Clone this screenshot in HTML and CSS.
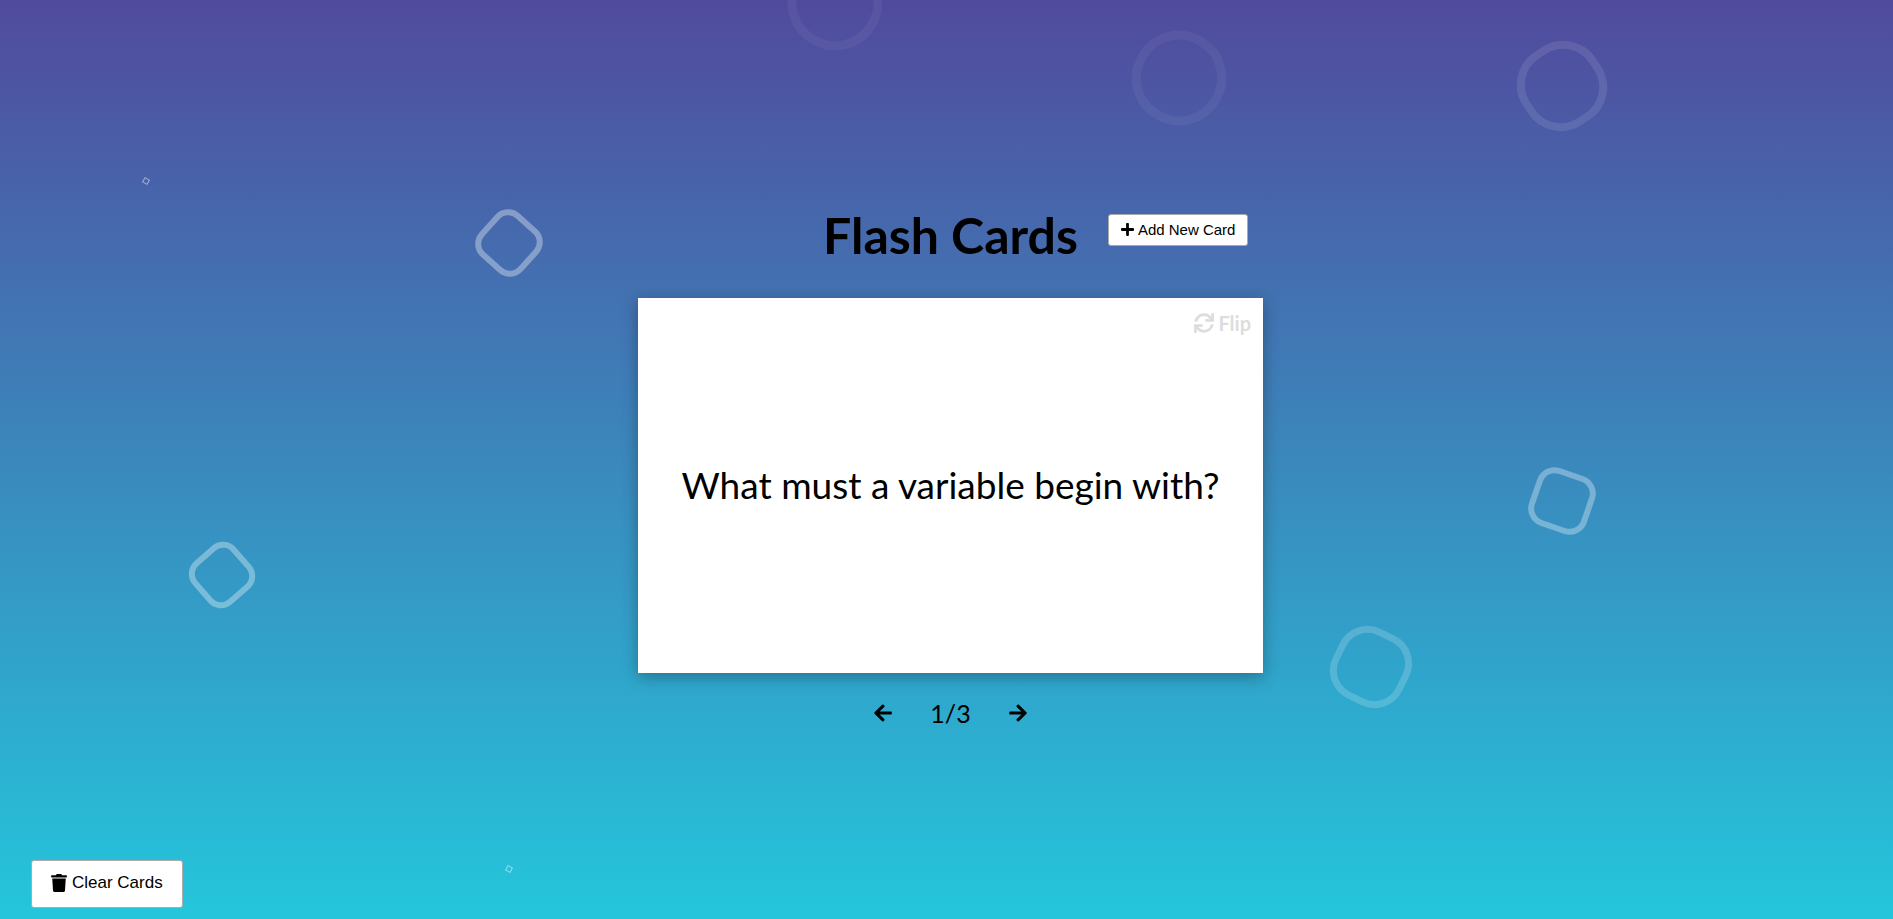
FILE: index.html
```html
<!DOCTYPE html>
<html lang="en">
<head>
<meta charset="utf-8">
<title>Flash Cards</title>
<link rel="stylesheet" href="styles.css">
</head>
<body>
<div class="shapes" aria-hidden="true">
  <span class="shape shape-top"></span>
  <span class="shape shape-round"></span>
  <span class="shape shape-corner"></span>
  <span class="shape shape-upper-left"></span>
  <span class="shape shape-lower-left"></span>
  <span class="shape shape-right"></span>
  <span class="shape shape-lower-right"></span>
  <span class="shape shape-dot-left"></span>
  <span class="shape shape-dot-bottom"></span>
</div>
<main class="deck">
  <header class="deck-header">
    <h1 class="title">Flash Cards</h1>
    <button class="btn btn-small" type="button">
      <svg class="icon icon-plus" viewBox="0 0 448 512" aria-hidden="true"><path d="M416 208H272V64c0-17.67-14.33-32-32-32h-32c-17.67 0-32 14.33-32 32v144H32c-17.67 0-32 14.33-32 32v32c0 17.67 14.33 32 32 32h144v144c0 17.67 14.33 32 32 32h32c17.67 0 32-14.33 32-32V304h144c17.67 0 32-14.33 32-32v-32c0-17.67-14.33-32-32-32z"/></svg>
      Add New Card
    </button>
  </header>
  <article class="card">
    <p class="flip">
      <svg class="icon icon-flip" viewBox="0 0 512 512" aria-hidden="true"><path d="M440.65 12.57l4 82.77A247.16 247.16 0 0 0 255.83 8C134.73 8 33.91 94.92 12.29 209.82A12 12 0 0 0 24.09 224h49.05a12 12 0 0 0 11.67-9.26 175.91 175.91 0 0 1 317-56.94l-101.46-4.86a12 12 0 0 0-12.57 12v47.41a12 12 0 0 0 12 12H500a12 12 0 0 0 12-12V12a12 12 0 0 0-12-12h-47.37a12 12 0 0 0-11.98 12.57zM255.83 432a175.61 175.61 0 0 1-146-77.8l101.8 4.87a12 12 0 0 0 12.57-12v-47.4a12 12 0 0 0-12-12H12a12 12 0 0 0-12 12V500a12 12 0 0 0 12 12h47.35a12 12 0 0 0 12-12.6l-4.15-82.57A247.17 247.17 0 0 0 255.83 504c121.11 0 221.93-86.92 243.55-201.82a12 12 0 0 0-11.8-14.18h-49.05a12 12 0 0 0-11.67 9.26A175.86 175.86 0 0 1 255.83 432z"/></svg>
      Flip
    </p>
    <p class="question">What must a variable begin with?</p>
  </article>
  <nav class="navigation" aria-label="Cards">
    <button class="nav-button" type="button" aria-label="Previous card">
      <svg class="icon icon-arrow" viewBox="0 0 448 512" aria-hidden="true"><path d="M257.5 445.1l-22.2 22.2c-9.4 9.4-24.6 9.4-33.9 0L7 273c-9.4-9.4-9.4-24.6 0-33.9L201.4 44.7c9.4-9.4 24.6-9.4 33.9 0l22.2 22.2c9.5 9.5 9.3 25-.4 34.3L136.6 216H424c13.3 0 24 10.7 24 24v32c0 13.3-10.7 24-24 24H136.6l120.5 114.8c9.8 9.3 10 24.8.4 34.3z"/></svg>
    </button>
    <p class="current">1/3</p>
    <button class="nav-button" type="button" aria-label="Next card">
      <svg class="icon icon-arrow" viewBox="0 0 448 512" aria-hidden="true"><path d="M190.5 66.9l22.2-22.2c9.4-9.4 24.6-9.4 33.9 0L441 239c9.4 9.4 9.4 24.6 0 33.9L246.6 467.3c-9.4 9.4-24.6 9.4-33.9 0l-22.2-22.2c-9.5-9.5-9.3-25 .4-34.3L311.4 296H24c-13.3 0-24-10.7-24-24v-32c0-13.3 10.7-24 24-24h287.4L190.9 101.2c-9.8-9.3-10-24.8-.4-34.3z"/></svg>
    </button>
  </nav>
</main>
<footer class="footer">
  <button class="btn btn-large" type="button">
    <svg class="icon icon-trash" viewBox="0 0 448 512" aria-hidden="true"><path d="M432 32H312l-9.4-18.7A24 24 0 0 0 281.1 0H166.8a23.72 23.72 0 0 0-21.4 13.3L136 32H16A16 16 0 0 0 0 48v32a16 16 0 0 0 16 16h416a16 16 0 0 0 16-16V48a16 16 0 0 0-16-16zM53.2 467a48 48 0 0 0 47.9 45h245.8a48 48 0 0 0 47.9-45L416 128H32z"/></svg>
    Clear Cards
  </button>
</footer>
</body>
</html>
```

FILE: styles.css
```css
* {
  box-sizing: border-box;
}

body {
  position: relative;
  display: flex;
  flex-direction: column;
  min-height: 100vh;
  margin: 0;
  overflow: hidden;
  background: linear-gradient(to bottom, #514a9d, #24c6dc);
  color: #000;
  font-family: Lato, sans-serif;
}

p,
h1 {
  margin: 0;
}

.icon {
  display: block;
  flex: none;
  fill: currentColor;
}

/* Floating background shapes */
.shapes {
  position: absolute;
  inset: 0;
  overflow: hidden;
  pointer-events: none;
}

.shape {
  position: absolute;
  border: 6px solid #fff;
  border-radius: 30%;
  translate: -50% -50%;
}

.shape-top,
.shape-round {
  width: 94px;
  height: 94px;
  border-width: 9px;
  border-radius: 49%;
  opacity: 0.05;
  rotate: 30deg;
}

.shape-top {
  left: 44.1%;
  top: 0.3%;
}

.shape-round {
  left: 62.3%;
  top: 8.5%;
}

.shape-corner {
  left: 82.5%;
  top: 9.4%;
  width: 87px;
  height: 87px;
  border-width: 8px;
  border-radius: 45%;
  opacity: 0.1;
  rotate: 57deg;
}

.shape-upper-left {
  left: 26.9%;
  top: 26.45%;
  width: 58px;
  height: 58px;
  opacity: 0.35;
  rotate: 42deg;
}

.shape-lower-left {
  left: 11.75%;
  top: 62.6%;
  width: 57px;
  height: 57px;
  opacity: 0.34;
  rotate: 49deg;
}

.shape-right {
  left: 82.5%;
  top: 54.5%;
  width: 61px;
  height: 61px;
  opacity: 0.32;
  rotate: 19deg;
}

.shape-lower-right {
  left: 72.45%;
  top: 72.6%;
  width: 77px;
  height: 77px;
  border-width: 7px;
  border-radius: 40%;
  opacity: 0.18;
  rotate: 26deg;
}

.shape-dot-left,
.shape-dot-bottom {
  width: 6px;
  height: 6px;
  border-width: 1px;
  border-radius: 0;
  opacity: 0.5;
  rotate: 30deg;
}

.shape-dot-left {
  left: 7.7%;
  top: 19.7%;
}

.shape-dot-bottom {
  left: 26.9%;
  top: 94.6%;
}

/* Buttons */
.btn {
  display: inline-flex;
  align-items: center;
  gap: 4px;
  border: 1px solid #aaa;
  border-radius: 3px;
  background: #fff;
  color: #000;
  font-family: "Liberation Sans", Arial, sans-serif;
  cursor: pointer;
}

.btn-small {
  padding: 6px 12px;
  font-size: 15px;
  line-height: 18px;
}

.btn-large {
  gap: 5px;
  padding: 12px 19px 14px;
  font-size: 17px;
  line-height: 20px;
}

.icon-plus {
  width: 13px;
  height: 15px;
}

.icon-trash {
  width: 16px;
  height: 18px;
}

/* Deck */
.deck {
  position: relative;
  display: flex;
  flex: 1;
  flex-direction: column;
  align-items: center;
  justify-content: center;
  padding: 74px 0 0 8px;
}

.deck-header {
  display: grid;
  grid-template-columns: 1fr auto 1fr;
  column-gap: 30px;
  width: 100%;
  max-width: 625px;
  margin-bottom: 34px;
}

.title {
  grid-column: 2;
  font-size: 50px;
  font-weight: 700;
  line-height: 58px;
}

.deck-header .btn {
  align-self: start;
  justify-self: start;
  margin-top: 8px;
  white-space: nowrap;
}

.card {
  display: grid;
  grid-template-rows: 50px 1fr 50px;
  width: 100%;
  max-width: 625px;
  height: 375px;
  background: #fff;
  box-shadow: 0 4px 15px rgba(0, 0, 0, 0.3);
}

.flip {
  display: flex;
  align-items: center;
  justify-self: end;
  gap: 4px;
  padding-right: 12px;
  color: #ddd;
  font-size: 20px;
  font-weight: 700;
  line-height: 24px;
}

.icon-flip {
  width: 20px;
  height: 20px;
}

.question {
  align-self: center;
  text-align: center;
  font-size: 37px;
  line-height: 48px;
}

.navigation {
  display: flex;
  align-items: center;
  gap: 18px;
  margin-top: 24px;
}

.nav-button {
  padding: 6px 20px;
  border: 0;
  background: none;
  color: inherit;
  cursor: pointer;
}

.icon-arrow {
  width: 18px;
  height: 20px;
}

.current {
  font-size: 25px;
  line-height: 32px;
}

.footer {
  position: relative;
  padding: 0 0 11px 31px;
}

.footer .btn {
  display: flex;
}
```
